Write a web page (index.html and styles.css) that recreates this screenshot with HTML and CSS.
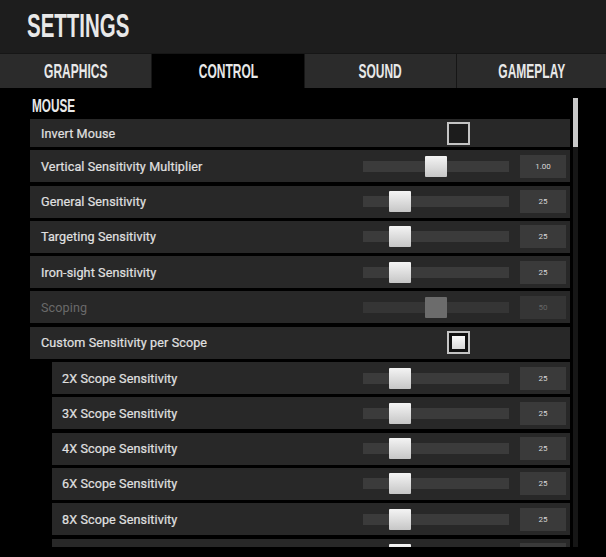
FILE: index.html
```html
<!DOCTYPE html>
<html lang="en">
<head>
    <meta charset="UTF-8">
    <title>Settings</title>
    <link rel="stylesheet" href="styles.css">
</head>
<body>
    <div class="header">
        <h1 class="title"><span>SETTINGS</span></h1>
    </div>

    <div class="tabs">
        <div class="tab"><span>GRAPHICS</span></div>
        <div class="tab active"><span>CONTROL</span></div>
        <div class="tab"><span>SOUND</span></div>
        <div class="tab"><span>GAMEPLAY</span></div>
    </div>

    <div class="content">
        <div class="scroll">
            <div class="section-title"><span>MOUSE</span></div>
            <div class="rows">
                <div class="row short">
                    <div class="label">Invert Mouse</div>
                    <div class="controls">
                        <div class="checkbox"></div>
                    </div>
                </div>
                <div class="row">
                    <div class="label">Vertical Sensitivity Multiplier</div>
                    <div class="controls">
                        <div class="track"><div class="thumb" style="left: 62px"></div></div>
                        <div class="value">1.00</div>
                    </div>
                </div>
                <div class="row">
                    <div class="label">General Sensitivity</div>
                    <div class="controls">
                        <div class="track"><div class="thumb" style="left: 26px"></div></div>
                        <div class="value">25</div>
                    </div>
                </div>
                <div class="row">
                    <div class="label">Targeting Sensitivity</div>
                    <div class="controls">
                        <div class="track"><div class="thumb" style="left: 26px"></div></div>
                        <div class="value">25</div>
                    </div>
                </div>
                <div class="row">
                    <div class="label">Iron-sight Sensitivity</div>
                    <div class="controls">
                        <div class="track"><div class="thumb" style="left: 26px"></div></div>
                        <div class="value">25</div>
                    </div>
                </div>
                <div class="row disabled">
                    <div class="label">Scoping</div>
                    <div class="controls">
                        <div class="track"><div class="thumb" style="left: 62px"></div></div>
                        <div class="value">50</div>
                    </div>
                </div>
                <div class="row">
                    <div class="label">Custom Sensitivity per Scope</div>
                    <div class="controls">
                        <div class="checkbox checked"><div class="tick"></div></div>
                    </div>
                </div>
                <div class="row sub">
                    <div class="label">2X Scope Sensitivity</div>
                    <div class="controls">
                        <div class="track"><div class="thumb" style="left: 26px"></div></div>
                        <div class="value">25</div>
                    </div>
                </div>
                <div class="row sub">
                    <div class="label">3X Scope Sensitivity</div>
                    <div class="controls">
                        <div class="track"><div class="thumb" style="left: 26px"></div></div>
                        <div class="value">25</div>
                    </div>
                </div>
                <div class="row sub">
                    <div class="label">4X Scope Sensitivity</div>
                    <div class="controls">
                        <div class="track"><div class="thumb" style="left: 26px"></div></div>
                        <div class="value">25</div>
                    </div>
                </div>
                <div class="row sub">
                    <div class="label">6X Scope Sensitivity</div>
                    <div class="controls">
                        <div class="track"><div class="thumb" style="left: 26px"></div></div>
                        <div class="value">25</div>
                    </div>
                </div>
                <div class="row sub">
                    <div class="label">8X Scope Sensitivity</div>
                    <div class="controls">
                        <div class="track"><div class="thumb" style="left: 26px"></div></div>
                        <div class="value">25</div>
                    </div>
                </div>
                <!-- next row, scrolled past the bottom edge -->
                <div class="row sub">
                    <div class="label"></div>
                    <div class="controls">
                        <div class="track"><div class="thumb" style="left: 26px"></div></div>
                        <div class="value"></div>
                    </div>
                </div>
            </div>
        </div>
        <div class="scrollbar"><div class="scroll-thumb"></div></div>
    </div>
</body>
</html>
```

FILE: styles.css
```css
body {
    margin: 0;
    background-color: #000;
    color: #e4e4e4;
    font-family: 'Roboto', 'Liberation Sans', sans-serif;
    width: 606px;
    height: 557px;
    overflow: hidden;
}
.header {
    height: 53px;
    background-color: #1d1d1d;
    border-bottom: 1px solid #161616;
}
.title {
    margin: 0;
    padding: 5px 0 0 27px;
    font-family: 'Liberation Sans', sans-serif;
    font-weight: bold;
    font-size: 33px;
    line-height: 42px;
    color: #e8e8e8;
}
.title span,
.section-title span {
    display: inline-block;
    transform: scaleX(0.62);
    transform-origin: left center;
}
.tabs {
    display: grid;
    grid-template-columns: 151px 152px 151px 150px;
    column-gap: 1px;
    height: 34px;
    background-color: #161616;
}
.tab {
    background-color: #2b2b2b;
    display: flex;
    align-items: center;
    justify-content: center;
    font-family: 'Liberation Sans', sans-serif;
    font-weight: bold;
    font-size: 20px;
    color: #e8e8e8;
}
.tab span {
    display: inline-block;
    transform: scaleX(0.6);
}
.tab.active {
    background-color: #000;
}
.content {
    display: flex;
    height: 469px;
}
.scroll {
    width: 540px;
    margin-left: 30px;
    height: 459px;
    overflow: hidden;
}
.section-title {
    font-family: 'Liberation Sans', sans-serif;
    font-weight: bold;
    font-size: 19px;
    line-height: 20px;
    height: 20px;
    margin: 8px 0 3px 2px;
    color: #e8e8e8;
}
.rows {
    display: flex;
    flex-direction: column;
    gap: 3.3px;
}
.row {
    height: 32px;
    flex-shrink: 0;
    display: flex;
    align-items: center;
    justify-content: space-between;
    background-color: #282828;
}
.row.short {
    height: 28px;
}
.row.sub {
    margin-left: 22px;
}
.label {
    padding-left: 11px;
    font-size: 12.6px;
    font-weight: 400;
    letter-spacing: 0.1px;
    color: #e0e0e0;
    -webkit-text-stroke: 0.2px #e0e0e0;
}
.row.sub .label {
    padding-left: 10px;
}
.row.disabled .label {
    color: #6a6a6a;
    -webkit-text-stroke: 0;
}
.controls {
    width: 203px;
    margin-right: 4px;
    display: flex;
    align-items: center;
    justify-content: space-between;
}
.checkbox {
    width: 19px;
    height: 19px;
    margin-left: 84px;
    margin-right: auto;
    border: 2px solid #c4c4c4;
    background-color: #1c1c1c;
    display: flex;
    align-items: center;
    justify-content: center;
}
.checkbox.checked {
    background-color: #111;
}
.tick {
    width: 13px;
    height: 13px;
    background: linear-gradient(#fafafa, #d8d8d8);
}
.track {
    position: relative;
    width: 146px;
    height: 11px;
    background-color: #3b3b3b;
}
.thumb {
    position: absolute;
    top: -5px;
    width: 22px;
    height: 21px;
    background: linear-gradient(#f4f4f4, #c6c6c6);
    border-radius: 1px;
}
.row.disabled .thumb {
    background: #6c6c6c;
}
.row.disabled .track {
    background-color: #353535;
}
.value {
    width: 46px;
    height: 23px;
    line-height: 23px;
    text-align: center;
    font-size: 8px;
    background-color: #3a3a3a;
    color: #d8d8d8;
}
.row.disabled .value {
    color: #666;
    background-color: #353535;
}
.scrollbar {
    width: 5px;
    margin-left: 3px;
    margin-top: 10px;
    height: 449px;
    background-color: #161616;
}
.scroll-thumb {
    height: 49px;
    background-color: #c8c8c8;
}
```
